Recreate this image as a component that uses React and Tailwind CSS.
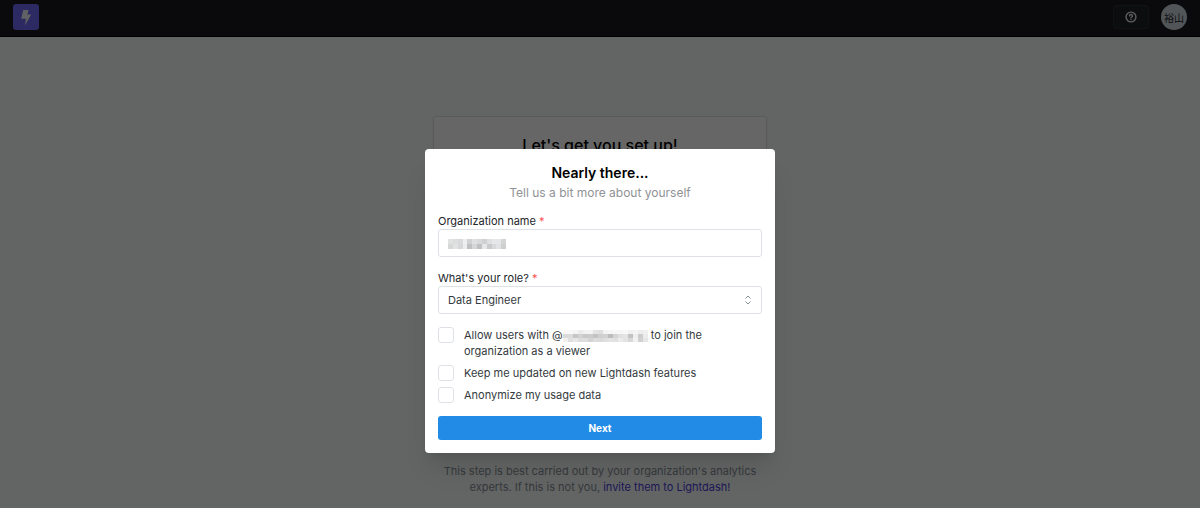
import { useState } from "react";

const ORG_MOSAIC = [
  ["#e0e1e1", "#dcdddd", "#d9dada", "#eeeff0", "#d0d1d2", "#dfe0e0", "#d8d9da", "#cfd0d0", "#dfe0e2", "#e6e7e9", "#e5e6e8", "#d3d5d5"],
  ["#d6d7d7", "#e1e2e2", "#d6d7d8", "#ecedee", "#bfc0c1", "#d5d6d7", "#bfc0c1", "#e6e7e7", "#c9cacb", "#d8d9db", "#e1e2e3", "#cdcfcf"],
];

const DOMAIN_MOSAIC = [
  ["#f7f7f7", "#f8f8f8", "#f5f5f5", "#ececec", "#f3f3f3", "#f4f4f4", "#e4e4e4", "#dedede", "#f3f3f3", "#f6f6f6", "#f7f7f7", "#f7f7f7", "#f7f7f7", "#f0f0f0", "#f4f4f4", "#ededed", "#efefef"],
  ["#dadada", "#dcdcdc", "#c6c6c6", "#d2d2d2", "#c8c8c8", "#cccccc", "#c2c2c2", "#cfcfcf", "#d1d1d1", "#bcbcbc", "#d4d4d4", "#e0e0e0", "#e4e4e4", "#c3c3c3", "#eeeeee", "#cdcdcd", "#ececec"],
  ["#f0f0f0", "#e0e0e0", "#e7e7e7", "#dcdcdc", "#dedede", "#d3d3d3", "#dddddd", "#dadada", "#dfdfdf", "#e3e3e3", "#e0e0e0", "#ebebeb", "#e3e3e3", "#d8d8d8", "#f2f2f2", "#d1d1d1", "#e6e6e6"],
];

function Mosaic({ rows, cellHeight, className }) {
  return (
    <svg
      viewBox={`0 0 ${rows[0].length * 5} ${rows.length * cellHeight}`}
      preserveAspectRatio="none"
      shapeRendering="crispEdges"
      className={className}
      aria-hidden="true"
    >
      {rows.map((row, y) =>
        row.map((fill, x) => (
          <rect key={`${x}-${y}`} x={x * 5} y={y * cellHeight} width="5" height={cellHeight} fill={fill} />
        ))
      )}
    </svg>
  );
}

function Navbar() {
  return (
    <header className="flex h-[37px] items-center justify-between border-b border-black bg-[#1a1b1e] px-[13px] pb-[2px]">
      <a
        href="#home"
        aria-label="Lightdash home"
        className="flex size-[26px] items-center justify-center rounded-[3px] bg-[#7067f5]"
      >
        <svg viewBox="0 0 12 17" className="h-[17px] w-3" fill="#f1f3f5">
          <path d="M3.2 1h5.3L7.4 5.4h3.8L5 16.4l.9-6.6H1.2z" />
        </svg>
      </a>
      <div className="flex items-center gap-3">
        <button
          type="button"
          aria-label="Help"
          className="flex h-6 w-9 items-center justify-center rounded-[3px] border border-[#2c2e33] bg-[#202124]"
        >
          <svg viewBox="0 0 12 12" className="size-3" fill="none" stroke="#e9ecef" strokeWidth="1.4" strokeLinecap="round">
            <circle cx="6" cy="6" r="4.9" />
            <path d="M4.5 4.9c.1-1.9 3-1.8 3 0 0 1.1-1.5 1.1-1.5 2.1M6 8.7v.1" />
          </svg>
        </button>
        <button
          type="button"
          className="flex size-[26px] items-center justify-center rounded-full bg-[#ced4da] font-['Noto_Sans_CJK_JP',sans-serif] text-[10px] text-[#212529]"
        >
          裕山
        </button>
      </div>
    </header>
  );
}

function Check({ children }) {
  return (
    <label className="flex items-start gap-[10px] text-[11px] leading-4">
      <input
        type="checkbox"
        className="size-4 shrink-0 appearance-none rounded-[3px] border border-[#dee2e6] bg-white checked:bg-[#228be6]"
      />
      <span>{children}</span>
    </label>
  );
}

function SetupModal() {
  const [role, setRole] = useState("Data Engineer");

  return (
    <div className="absolute inset-0 flex items-start justify-center bg-black/60 pt-[149px]">
      <form
        role="dialog"
        aria-labelledby="setup-title"
        onSubmit={(e) => e.preventDefault()}
        className="w-full max-w-[350px] rounded-[4px] bg-white px-[13px] pt-[14px] pb-[13px] text-[#343a40] shadow-xl"
      >
        <h2 id="setup-title" className="text-center text-[14px] leading-5 font-semibold text-black">
          Nearly there...
        </h2>
        <p className="text-center text-[12px] leading-5 text-[#909296]">Tell us a bit more about yourself</p>

        <label htmlFor="org" className="mt-[10px] block text-[11px] leading-4 text-[#212529]">
          Organization name <span className="text-[#fa5252]">*</span>
        </label>
        <div className="relative">
          <input
            id="org"
            type="text"
            className="block h-7 w-full rounded-[3px] border border-[#dee2e6] bg-white px-[9px] text-[11px]"
          />
          <Mosaic
            rows={ORG_MOSAIC}
            cellHeight={5}
            className="pointer-events-none absolute top-[10px] left-[10px] h-[10px] w-[58px]"
          />
        </div>

        <label htmlFor="role" className="mt-[13px] block text-[11px] leading-4 text-[#212529]">
          What's your role? <span className="text-[#fa5252]">*</span>
        </label>
        <div className="relative">
          <select
            id="role"
            value={role}
            onChange={(e) => setRole(e.target.value)}
            className="block h-7 w-full appearance-none rounded-[3px] border border-[#dee2e6] bg-white px-[9px] text-[11px]"
          >
            <option>Data Engineer</option>
            <option>Data Analyst</option>
            <option>Data Scientist</option>
          </select>
          <svg
            viewBox="0 0 8 10"
            className="pointer-events-none absolute top-[9px] right-[10px] h-[10px] w-2"
            fill="none"
            stroke="#868e96"
          >
            <path d="M1.5 3.5 4 1l2.5 2.5M1.5 6.5 4 9l2.5-2.5" />
          </svg>
        </div>

        <div className="mt-[13px] flex flex-col gap-[6px]">
          <Check>
            Allow users with @
            <Mosaic rows={DOMAIN_MOSAIC} cellHeight={4} className="inline-block h-3 w-[85px] align-middle" /> to join the
            organization as a viewer
          </Check>
          <Check>Keep me updated on new Lightdash features</Check>
          <Check>Anonymize my usage data</Check>
        </div>

        <button
          type="submit"
          className="mt-[13px] h-6 w-full rounded-[3px] bg-[#228be6] text-[10px] font-bold text-white"
        >
          Next
        </button>
      </form>
    </div>
  );
}

export default function App() {
  return (
    <div className="relative min-h-screen bg-[#f8fcfa] font-['Inter',sans-serif]">
      <Navbar />
      <main className="mx-auto flex max-w-[334px] flex-col gap-[14px] pt-[79px]">
        <section className="h-[333px] rounded-[3px] border border-[#dee2e6] bg-white pt-4 shadow-xs">
          <h1 className="text-center text-[16px] leading-6 font-medium text-black">Let's get you set up!</h1>
        </section>
        <p className="text-center text-[11px] leading-4 text-[#868e96]">
          This step is best carried out by your organization's analytics experts. If this is not you,{" "}
          <a href="#invite" className="text-[#4a40d8]">
            invite them to Lightdash!
          </a>
        </p>
      </main>
      <SetupModal />
    </div>
  );
}
